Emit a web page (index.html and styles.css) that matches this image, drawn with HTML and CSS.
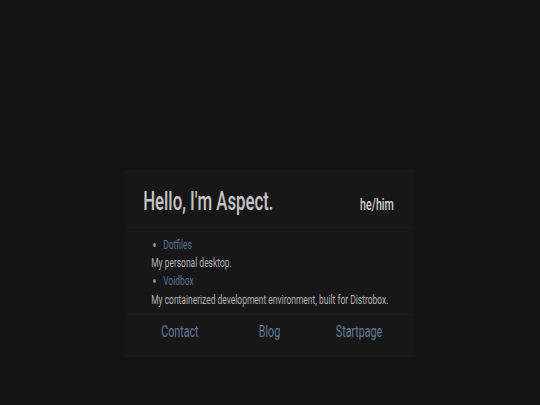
FILE: index.html
```html
<!DOCTYPE html>
<html lang="en">
<head>
<meta charset="utf-8">
<title>Aspect</title>
<link rel="stylesheet" href="styles.css">
</head>
<body>
<div class="stage">
  <main class="card">
    <header class="card-header">
      <h1 class="title">Hello, I'm Aspect.</h1>
      <span class="pronouns">he/him</span>
    </header>
    <section class="card-body">
      <ul class="projects">
        <li><a class="project-link" href="#">Dotfiles</a></li>
      </ul>
      <p class="desc">My personal desktop.</p>
      <ul class="projects">
        <li><a class="project-link" href="#">Voidbox</a></li>
      </ul>
      <p class="desc">My containerized development environment, built for Distrobox.</p>
    </section>
    <nav class="card-footer">
      <a class="nav-link" href="#">Contact</a>
      <a class="nav-link" href="#">Blog</a>
      <a class="nav-link" href="#">Startpage</a>
    </nav>
  </main>
</div>
</body>
</html>
```
FILE: styles.css
```css
html, body {
  margin: 0;
  padding: 0;
  background: #141414;
  overflow: hidden;
}

body {
  font-family: Roboto, "Liberation Sans", sans-serif;
}

.stage {
  width: 540px;
  height: 405px;
  box-sizing: border-box;
  padding: 170px 2px 0 0;
  display: flex;
  flex-direction: column;
  align-items: center;
}

.card {
  width: 435px;
  height: 187px;
  flex: none;
  box-sizing: border-box;
  background: #171717;
  border: 1px solid #1a1a1a;
  display: flex;
  flex-direction: column;
  transform: scaleX(0.6667);
  transform-origin: 50% 0;
}

.card-header {
  display: flex;
  justify-content: space-between;
  align-items: baseline;
  padding: 16px 30px 10px 27px;
  border-bottom: 1px solid #1b1b1b;
}

.title {
  margin: 0;
  font-size: 25.2px;
  font-weight: 500;
  line-height: 30px;
  color: #c4c4c4;
}

.pronouns {
  font-size: 16px;
  font-weight: 500;
  color: #d2d2d2;
}

.card-body {
  padding: 8px 30px 5px 39px;
  font-size: 12.7px;
  line-height: 18.2px;
  color: #b4b4b4;
}

.projects {
  margin: 0;
  padding-left: 18px;
  color: #a0a0a0;
}

.project-link {
  color: #5a7490;
  text-decoration: none;
}

.desc {
  margin: 0;
}

.card-footer {
  display: grid;
  grid-template-columns: 1fr 1fr 1fr;
  padding: 7px 15px 15px;
  border-top: 1px solid #1b1b1b;
  text-align: center;
}

.nav-link {
  font-size: 16px;
  line-height: 19px;
  color: #627c97;
  text-decoration: none;
}
```
